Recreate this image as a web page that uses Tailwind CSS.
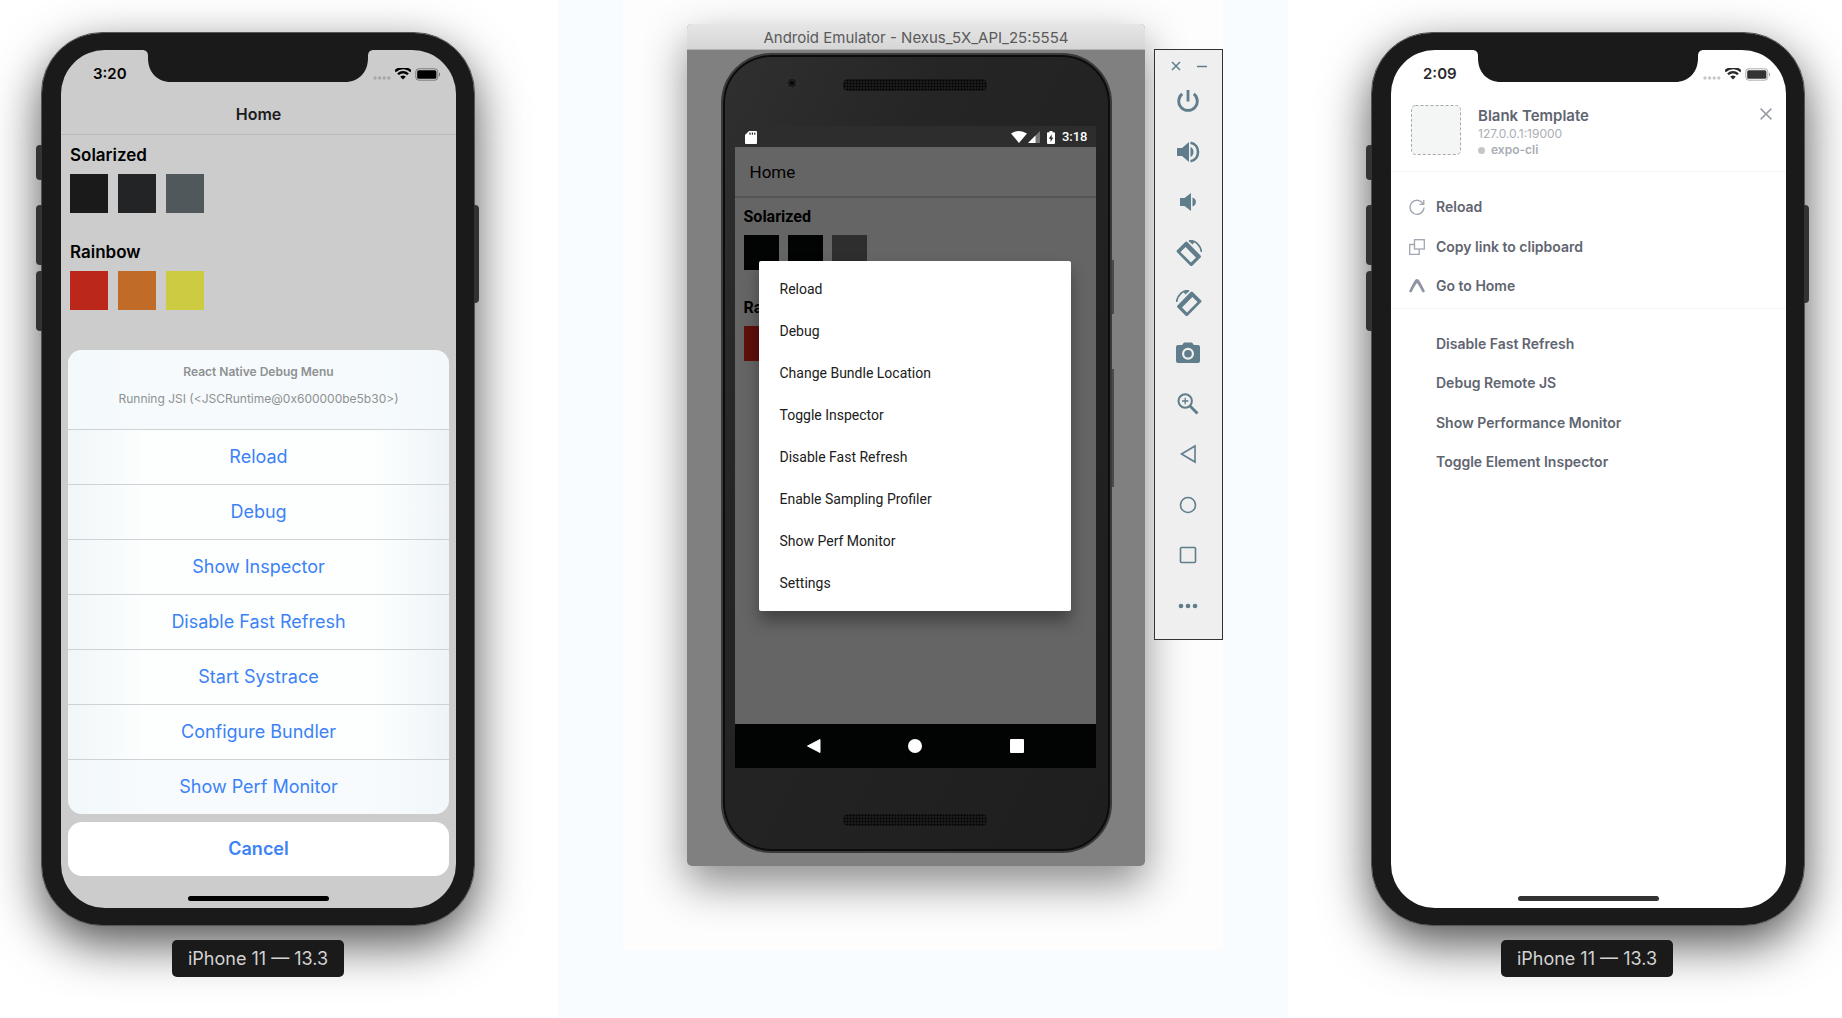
<!DOCTYPE html>
<html lang="en">
<head>
<meta charset="utf-8">
<title>Developer menus</title>
<script src="https://cdn.jsdelivr.net/npm/@tailwindcss/browser@4"></script>
</head>
<body class="bg-[#f8fcff] font-[Inter,sans-serif]">
<svg class="absolute h-0 w-0" aria-hidden="true">
  <defs><pattern id="mesh" width="3" height="3" patternUnits="userSpaceOnUse"><rect width="3" height="3" fill="#1c1c1c"/><circle cx="1.500" cy="1.500" r="1" fill="#000"/></pattern></defs>
  <symbol id="notch" viewBox="0 0 232 33"><path d="M0 0H232C228 0 226 2 226 6V8C226 22 217 32 203 32H29C15 32 6 22 6 8V6C6 2 4 0 0 0Z"/></symbol>
  <symbol id="wifi" viewBox="1 1 14 10.500"><path d="M8 2.2c2.3 0 4.400.9 6 2.400.1.1.3.1.4 0l1.100-1.200c.1-.1.1-.3 0-.4a10.900 10.900 0 0 0-15 0c-.1.1-.1.3 0 .4l1.100 1.200c.1.1.3.1.4 0A8.700 8.700 0 0 1 8 2.200Zm0 3.700c1.200 0 2.400.5 3.300 1.300.1.1.3.1.4 0l1.200-1.200c.1-.1.1-.3 0-.4a7.100 7.100 0 0 0-9.800 0c-.1.1-.1.3 0 .4l1.200 1.200c.1.1.3.1.4 0C5.600 6.400 6.800 5.900 8 5.900Zm2.200 2.900c.1-.1.1-.3 0-.4a3.500 3.500 0 0 0-4.400 0c-.1.1-.1.3 0 .4l2 2c.1.1.3.1.4 0Z"/></symbol>
  <symbol id="battery" viewBox="0 0 26 13"><rect x=".8" y=".8" width="22" height="11.400" rx="3" fill="none" stroke="currentColor" stroke-opacity=".4"/><rect x="2.200" y="2.200" width="19.200" height="8.600" rx="1.500"/><path d="M24 4.500v4c1.600-.8 1.600-3.200 0-4Z" fill-opacity=".45"/></symbol>
  <symbol id="signal" viewBox="0 0 18 4"><circle cx="2" cy="2" r="1.700"/><circle cx="6.600" cy="2" r="1.700"/><circle cx="11.200" cy="2" r="1.700"/><circle cx="15.800" cy="2" r="1.700"/></symbol>
  <symbol id="speaker" viewBox="0 0 144 12"><rect width="144" height="12" rx="5" fill="url(#mesh)"/></symbol>
</svg>

<main class="grid min-h-screen grid-cols-[558fr_730fr_554fr]">

  <section class="flex flex-col items-start overflow-hidden bg-white pt-[33px] pl-[42px]" aria-label="iPhone debug menu">
    <div class="relative w-[432px] rounded-[60px] bg-[#1a1a1b] py-[17px] pr-[18px] pl-[19px] shadow-[0_18px_50px_rgba(0,0,0,0.7)] outline-1 outline-[#555]">
      <i class="absolute top-28 -left-1.5 h-[35px] w-1.5 rounded-l-sm bg-[#333]"></i>
      <i class="absolute top-[172px] -left-1.5 h-[60px] w-1.5 rounded-l-sm bg-[#333]"></i>
      <i class="absolute top-[238px] -left-1.5 h-[60px] w-1.5 rounded-l-sm bg-[#333]"></i>
      <i class="absolute top-[172px] -right-[5px] h-[98px] w-[5px] rounded-r-sm bg-[#333]"></i>
      <div class="relative flex h-[858px] flex-col overflow-hidden rounded-[44px] bg-[#ccc]">
        <svg class="absolute top-0 left-[81px] h-[33px] w-[232px] fill-[#1a1a1b]"><use href="#notch"/></svg>
        <div class="flex h-12 items-center justify-between pr-[15px] pl-8">
          <span class="text-[15px] font-semibold text-black">3:20</span>
          <span class="flex items-center gap-1 text-black">
            <svg class="mt-2 h-1 w-[18px] fill-[#a8a8a8]"><use href="#signal"/></svg>
            <svg class="h-3 w-4 fill-black"><use href="#wifi"/></svg>
            <svg class="h-[13px] w-[26px] fill-black"><use href="#battery"/></svg>
          </span>
        </div>
        <h1 class="flex h-[37px] items-center justify-center border-b border-[#bababa] pb-1 text-base font-semibold text-[#1c1c1e]">Home</h1>
        <div class="flex flex-col gap-[27px] px-[9px] pt-2">
          <div>
            <h2 class="mb-[7px] text-[17px] leading-6 font-semibold text-black">Solarized</h2>
            <div class="flex gap-[10px]"><i class="h-[39px] w-[38px] bg-[#1a1a1b]"></i><i class="h-[39px] w-[38px] bg-[#222426]"></i><i class="h-[39px] w-[38px] bg-[#50585b]"></i></div>
          </div>
          <div>
            <h2 class="mb-[7px] text-[17px] leading-6 font-semibold text-black">Rainbow</h2>
            <div class="flex gap-[10px]"><i class="h-[39px] w-[38px] bg-[#bb271a]"></i><i class="h-[39px] w-[38px] bg-[#c06c28]"></i><i class="h-[39px] w-[38px] bg-[#cccb42]"></i></div>
          </div>
        </div>
        <div class="mx-[7px] mt-auto mb-2 overflow-hidden rounded-[14px] bg-[linear-gradient(90deg,#f1f6f8,#f7fbfc_12%,#fdfefe_20%,#fdfefe_80%,#f7fbfc_88%,#eef3f7)] text-center">
          <div class="h-[79px] bg-[#f4f9fb]/80 pt-3 text-[#8d9192]">
            <p class="text-xs leading-5 font-semibold">React Native Debug Menu</p>
            <p class="mt-[7px] text-xs leading-5">Running JSI (&lt;JSCRuntime@0x600000be5b30&gt;)</p>
          </div>
          <div class="flex flex-col text-lg text-[#3b82f6]">
            <button class="h-[55px] border-t border-[#cdd2d4]">Reload</button>
            <button class="h-[55px] border-t border-[#cdd2d4]">Debug</button>
            <button class="h-[55px] border-t border-[#cdd2d4]">Show Inspector</button>
            <button class="h-[55px] border-t border-[#cdd2d4]">Disable Fast Refresh</button>
            <button class="h-[55px] border-t border-[#cdd2d4]">Start Systrace</button>
            <button class="h-[55px] border-t border-[#cdd2d4]">Configure Bundler</button>
            <button class="h-[55px] border-t border-[#cdd2d4] bg-[#f4f9fb]/60">Show Perf Monitor</button>
          </div>
        </div>
        <button class="mx-[7px] h-[54px] shrink-0 rounded-[14px] bg-white text-lg font-semibold text-[#3b82f6]">Cancel</button>
        <i class="mt-5 mb-[7px] h-[5px] w-[141px] shrink-0 self-center rounded-full bg-black"></i>
      </div>
    </div>
    <p class="relative mt-[15px] ml-[130px] rounded-[5px] bg-[#1a1a1b] px-4 text-lg leading-[37px] whitespace-nowrap text-[#d2d2d2]">iPhone 11 — 13.3</p>
  </section>

  <section class="flex items-start justify-center" aria-label="Android debug menu">
    <div class="flex h-[950px] w-[600px] items-start justify-between overflow-hidden bg-[#fdfdfd] pt-6 pl-16">
      <div class="w-[458px] overflow-hidden rounded-[5px] bg-[#808080] pb-[13px] shadow-[0_18px_44px_rgba(0,0,0,0.45)]">
        <div class="mb-[3px] h-[26px] border-b border-[#b5b5b5] bg-linear-to-b from-[#e6e6e6] to-[#d6d6d6] text-center text-[15px] leading-7 text-[#5a5a5a]">Android Emulator - Nexus_5X_API_25:5554</div>
        <div class="relative mx-auto flex h-[800px] w-[391px] flex-col rounded-[50px] border-2 border-[#3a3a3a] bg-linear-to-br from-[#303030] from-0% via-[#252525] via-30% to-[#1e1e1e] pr-[14px] pl-3 shadow-[inset_0_0_0_2px_#0c0c0c]">
          <i class="absolute top-[205px] -right-1 h-[54px] w-0.5 bg-[#4a4a4a]"></i>
          <i class="absolute top-[314px] -right-1 h-[118px] w-0.5 bg-[#4a4a4a]"></i>
          <div class="relative flex h-[71px] shrink-0 justify-center pt-6">
            <svg class="absolute top-5 left-[49px] h-4 w-4"><circle cx="8" cy="8" r="5" fill="#1d1d1d" stroke="#3d3d3d" stroke-dasharray="2 2"/><circle cx="8" cy="8" r="2" fill="#070707"/></svg>
            <svg class="h-3 w-36"><use href="#speaker"/></svg>
          </div>
          <div class="relative flex h-[642px] shrink-0 flex-col bg-[#656565] font-[Roboto,sans-serif] text-black">
            <div class="flex h-[21px] items-center bg-[#2d2d2d] pt-px pr-2 pl-[10px] text-[13px] font-medium text-white">
              <svg class="mr-auto h-[13px] w-3 fill-white" viewBox="0 0 12 13"><path fill-rule="evenodd" d="M4 0h7q1 0 1 1v11q0 1-1 1H1q-1 0-1-1V4ZM4.400 1.500v2.300h1.200V1.500ZM6.800 1.500v2.300H8V1.500ZM9.200 1.500v2.300h1.200V1.500Z"/></svg>
              <svg class="h-3 w-4 fill-white" viewBox="0 0 16 12"><path d="M8 12 0 2.500Q8-2.500 16 2.500Z"/></svg>
              <svg class="ml-px h-3 w-3 fill-white" viewBox="0 0 12 12"><path d="M12 0v12H0Z" fill-opacity=".35"/><path d="M7.500 4.500V12H0Z"/></svg>
              <svg class="mr-[7px] ml-[7px] h-[13px] w-2 fill-white" viewBox="0 0 8 13"><path fill-rule="evenodd" d="M2.500 0h3v1.300H7q1 0 1 1V12q0 1-1 1H1q-1 0-1-1V2.300q0-1 1-1h1.500ZM4.600 3.500 1.800 7.800h1.800v3.200l2.700-4.400H4.600Z"/></svg>
              3:18
            </div>
            <h1 class="flex h-[51px] items-center border-b-2 border-[#555] pt-[3px] pl-[15px] text-[17px]">Home</h1>
            <div class="flex flex-col gap-7 px-[9px] pt-[9px]">
              <div>
                <h2 class="mb-2 text-base leading-5 font-bold">Solarized</h2>
                <div class="flex gap-[9px]"><i class="h-[35px] w-[35px] bg-[#020303]"></i><i class="h-[35px] w-[35px] bg-[#020303]"></i><i class="h-[35px] w-[35px] bg-[#2e2e2e]"></i></div>
              </div>
              <div>
                <h2 class="mb-2 text-base leading-5 font-bold">Rainbow</h2>
                <div class="flex gap-[9px]"><i class="h-[35px] w-[35px] bg-[#5e0f0b]"></i><i class="h-[35px] w-[35px] bg-[#603614]"></i><i class="h-[35px] w-[35px] bg-[#666521]"></i></div>
              </div>
            </div>
            <div class="absolute top-[135px] left-6 flex w-[312px] flex-col rounded-[2px] bg-white py-[7px] text-sm text-[#202020] shadow-[0_10px_16px_rgba(0,0,0,0.35)]" role="dialog" aria-label="Developer menu">
              <button class="h-[42px] px-[21px] text-left">Reload</button>
              <button class="h-[42px] px-[21px] text-left">Debug</button>
              <button class="h-[42px] px-[21px] text-left">Change Bundle Location</button>
              <button class="h-[42px] px-[21px] text-left">Toggle Inspector</button>
              <button class="h-[42px] px-[21px] text-left">Disable Fast Refresh</button>
              <button class="h-[42px] px-[21px] text-left">Enable Sampling Profiler</button>
              <button class="h-[42px] px-[21px] text-left">Show Perf Monitor</button>
              <button class="h-[42px] px-[21px] text-left">Settings</button>
            </div>
            <div class="mt-auto flex h-11 items-center justify-between bg-[#020303] px-[72px]">
              <button aria-label="Back"><svg class="h-[14px] w-[14px] fill-white" viewBox="0 0 14 14"><path d="M13 .5v13L.5 7Z" stroke="#fff" stroke-linejoin="round"/></svg></button>
              <button aria-label="Home"><svg class="h-[14px] w-[14px] fill-white" viewBox="0 0 14 14"><circle cx="7" cy="7" r="7"/></svg></button>
              <button aria-label="Overview"><svg class="h-[14px] w-[14px] fill-white" viewBox="0 0 14 14"><rect width="14" height="14" rx="1"/></svg></button>
            </div>
          </div>
          <svg class="mt-[46px] h-3 w-36 self-center"><use href="#speaker"/></svg>
        </div>
      </div>

      <div class="relative mt-[25px] flex h-[591px] w-[69px] flex-col items-center border border-[#333] bg-[#efefef] text-[#5f7d8b]">
        <div class="flex h-[26px] w-full items-end justify-between pr-[15px] pl-4">
          <button aria-label="Close"><svg class="h-5 w-[10px]" viewBox="0 0 10 20" fill="none" stroke="currentColor" stroke-width="1.500"><path d="m1 6 8 8M9 6l-8 8"/></svg></button>
          <button aria-label="Minimize"><svg class="h-5 w-[10px]" viewBox="0 0 10 20" stroke="currentColor" stroke-width="1.500"><path d="M0 10.500h10"/></svg></button>
        </div>
        <div class="flex h-[555px] flex-col justify-between">
          <button class="flex h-[51px] items-center" aria-label="Power"><svg class="h-6 w-6" viewBox="0 0 24 24" fill="none" stroke="currentColor" stroke-width="2.800"><path d="M12 1v11.500M6.200 4.900a9.300 9.300 0 1 0 11.600 0"/></svg></button>
          <button class="flex h-[51px] items-center" aria-label="Volume up"><svg class="h-6 w-6" viewBox="0 0 24 24" fill="currentColor"><path d="M1 8h5l7-6v20l-7-6H1Z"/><path d="M14.500 7c4 1.500 4 8.500 0 10Z"/><path d="M14.500 2.800c10 1.700 10 16.700 0 18.400" fill="none" stroke="currentColor" stroke-width="2.600"/></svg></button>
          <button class="flex h-[51px] items-center" aria-label="Volume down"><svg class="h-6 w-6" viewBox="0 0 24 24" fill="currentColor"><path d="M4 8h4.500L15 3v18l-6.500-5H4Z"/><path d="M16.500 7.500c4.500 1.500 4.500 7.500 0 9Z"/></svg></button>
          <button class="flex h-[51px] items-center" aria-label="Rotate left"><svg class="h-[26px] w-[26px]" viewBox="0 0 26 26" fill="none" stroke="currentColor"><g id="tilt"><path fill="currentColor" stroke="none" fill-rule="evenodd" d="M1 10.200 9.300 2q1-1 2 0L24.500 15.500q1 1 0 2l-8.200 8.200q-1 1-2 0L1 12.300q-1-1 0-2.100ZM4.500 12 15 22.600l5-5L9.600 7Z"/><path d="M13 1c6-1.500 11.500 4 12.500 11" stroke-width="1.700"/><path d="m12.500 1 6.500.5-2.500 3Z" fill="currentColor" stroke="none"/></g></svg></button>
          <button class="flex h-[51px] items-center" aria-label="Rotate right"><svg class="h-[26px] w-[26px] -scale-x-100" viewBox="0 0 26 26" fill="none" stroke="currentColor"><use href="#tilt"/></svg></button>
          <button class="flex h-[51px] items-center" aria-label="Take screenshot"><svg class="h-6 w-6" viewBox="0 0 24 24" fill="currentColor"><path fill-rule="evenodd" d="M8 1.500h8L18 4h4q2 0 2 2v14q0 2-2 2H2q-2 0-2-2V6q0-2 2-2h4ZM12 6.800a6 6 0 1 0 0 12 6 6 0 0 0 0-12Z"/><circle cx="12" cy="12.800" r="3.800"/></svg></button>
          <button class="flex h-[51px] items-center" aria-label="Zoom"><svg class="h-6 w-6" viewBox="0 0 24 24" fill="none" stroke="currentColor"><circle cx="9.200" cy="9" r="6.700" stroke-width="2"/><path d="m14 14 7.500 7.500" stroke-width="2.800"/><path d="M9.200 5.800v6.400M6 9h6.400" stroke-width="1.300"/></svg></button>
          <button class="flex h-[51px] items-center" aria-label="Back"><svg class="h-6 w-6" viewBox="0 0 24 24" fill="none" stroke="currentColor" stroke-width="1.600"><path d="M19 4v16L5.500 12Z"/></svg></button>
          <button class="flex h-[51px] items-center" aria-label="Home"><svg class="h-6 w-6" viewBox="0 0 24 24" fill="none" stroke="currentColor" stroke-width="1.600"><circle cx="12" cy="12" r="7.500"/></svg></button>
          <button class="flex h-[51px] items-center" aria-label="Overview"><svg class="h-6 w-6" viewBox="0 0 24 24" fill="none" stroke="currentColor" stroke-width="1.600"><rect x="4.500" y="4.500" width="15" height="15" rx="1"/></svg></button>
          <button class="flex h-[51px] items-center" aria-label="More"><svg class="h-6 w-6" viewBox="0 0 24 24" fill="currentColor"><circle cx="5" cy="12" r="2.300"/><circle cx="12" cy="12" r="2.300"/><circle cx="19" cy="12" r="2.300"/></svg></button>
        </div>
      </div>
    </div>
  </section>

  <section class="flex flex-col items-end overflow-hidden bg-white pt-[33px] pr-[38px]" aria-label="Expo developer menu">
    <div class="relative w-[432px] rounded-[60px] bg-[#1a1a1a] py-[17px] pr-[18px] pl-[19px] shadow-[0_18px_50px_rgba(0,0,0,0.7)] outline-1 outline-[#555]">
      <i class="absolute top-28 -left-1.5 h-[35px] w-1.5 rounded-l-sm bg-[#333]"></i>
      <i class="absolute top-[172px] -left-1.5 h-[60px] w-1.5 rounded-l-sm bg-[#333]"></i>
      <i class="absolute top-[238px] -left-1.5 h-[60px] w-1.5 rounded-l-sm bg-[#333]"></i>
      <i class="absolute top-[172px] -right-[5px] h-[98px] w-[5px] rounded-r-sm bg-[#333]"></i>
      <div class="relative flex h-[858px] flex-col overflow-hidden rounded-[44px] bg-white">
        <svg class="absolute top-0 left-[81px] h-[33px] w-[232px] fill-[#1a1a1a]"><use href="#notch"/></svg>
        <div class="flex h-12 items-center justify-between pr-[15px] pl-8">
          <span class="text-[15px] font-semibold text-[#2a2a2c]">2:09</span>
          <span class="flex items-center gap-1 text-[#334]">
            <svg class="mt-2 h-1 w-[18px] fill-[#c8c8c8]"><use href="#signal"/></svg>
            <svg class="h-3 w-4 fill-[#2a2a2c]"><use href="#wifi"/></svg>
            <svg class="h-[13px] w-[26px] fill-[#333]"><use href="#battery"/></svg>
          </span>
        </div>
        <header class="flex h-[74px] items-start border-b border-[#f5f6f7] pt-[7px] pr-[14px] pl-5">
          <svg class="h-[50px] w-[50px] shrink-0" viewBox="0 0 50 50"><rect x=".5" y=".5" width="49" height="49" rx="4" fill="#f4f6f6" stroke="#a5a9b0" stroke-dasharray="3 2"/></svg>
          <div class="ml-[17px] flex-1">
            <h1 class="pt-px text-[15px] leading-5 font-semibold text-[#5f6570]">Blank Template</h1>
            <p class="text-xs leading-4 text-[#a9adb6]">127.0.0.1:19000</p>
            <p class="flex items-center gap-[6px] text-xs leading-4 font-semibold text-[#a9adb6]"><i class="h-[7px] w-[7px] rounded-full bg-[#c6c6c6]"></i>expo-cli</p>
          </div>
          <button class="mt-[3px]" aria-label="Close"><svg class="h-3 w-3" viewBox="0 0 12 12" fill="none" stroke="#9aa0aa" stroke-width="1.600"><path d="m.6.6 10.800 10.800M11.400.6.6 11.400"/></svg></button>
        </header>
        <nav class="flex h-[137px] flex-col border-b border-[#f5f6f7] pt-[15px] text-sm font-semibold text-[#5f6570]">
          <button class="flex h-10 items-center gap-[11px] pl-[18px] text-left"><svg class="h-4 w-4" viewBox="0 0 16 16" fill="none" stroke="#a0a5b2" stroke-width="1.300"><path d="M14.200 5A7 7 0 1 0 15 8.500M14.800 1v4.300h-4.300"/></svg>Reload</button>
          <button class="flex h-[39px] items-center gap-[11px] pl-[18px] text-left"><svg class="h-4 w-4" viewBox="0 0 16 16" fill="none" stroke="#a0a5b2" stroke-width="1.300"><rect x="5.500" y=".7" width="9.800" height="9.300"/><path d="M5.500 5.500H.7v9.800h9.500V10"/></svg>Copy link to clipboard</button>
          <button class="flex h-10 items-center gap-[11px] pl-[18px] text-left"><svg class="h-4 w-4" viewBox="0 0 16 16" fill="#8f95a3"><path d="M6.300 1.800q1.700-1.400 3.400 0c1.600 2.400 4 6.700 5.900 10.600q.6 1.800-1.100 2.100-.9 0-1.500-1.100C11.400 10.500 9.500 7 8.500 5.600q-.5-.5-1 0C6.500 7 4.600 10.500 3 13.400q-.6 1.100-1.500 1.100-1.700-.3-1.100-2.100C2.300 8.500 4.700 4.200 6.300 1.800Z"/></svg>Go to Home</button>
        </nav>
        <nav class="flex flex-col pt-[15px] text-sm font-semibold text-[#5f6570]">
          <button class="flex h-[39px] items-center pl-[45px] text-left">Disable Fast Refresh</button>
          <button class="flex h-10 items-center pl-[45px] text-left">Debug Remote JS</button>
          <button class="flex h-[39px] items-center pl-[45px] text-left">Show Performance Monitor</button>
          <button class="flex h-10 items-center pl-[45px] text-left">Toggle Element Inspector</button>
        </nav>
        <i class="mt-auto mb-[7px] h-[5px] w-[141px] self-center rounded-full bg-[#333]"></i>
      </div>
    </div>
    <p class="relative mt-[15px] mr-[131px] rounded-[5px] bg-[#1a1a1a] px-4 text-lg leading-[37px] whitespace-nowrap text-[#d2d2d2]">iPhone 11 — 13.3</p>
  </section>
</main>
</body>
</html>
